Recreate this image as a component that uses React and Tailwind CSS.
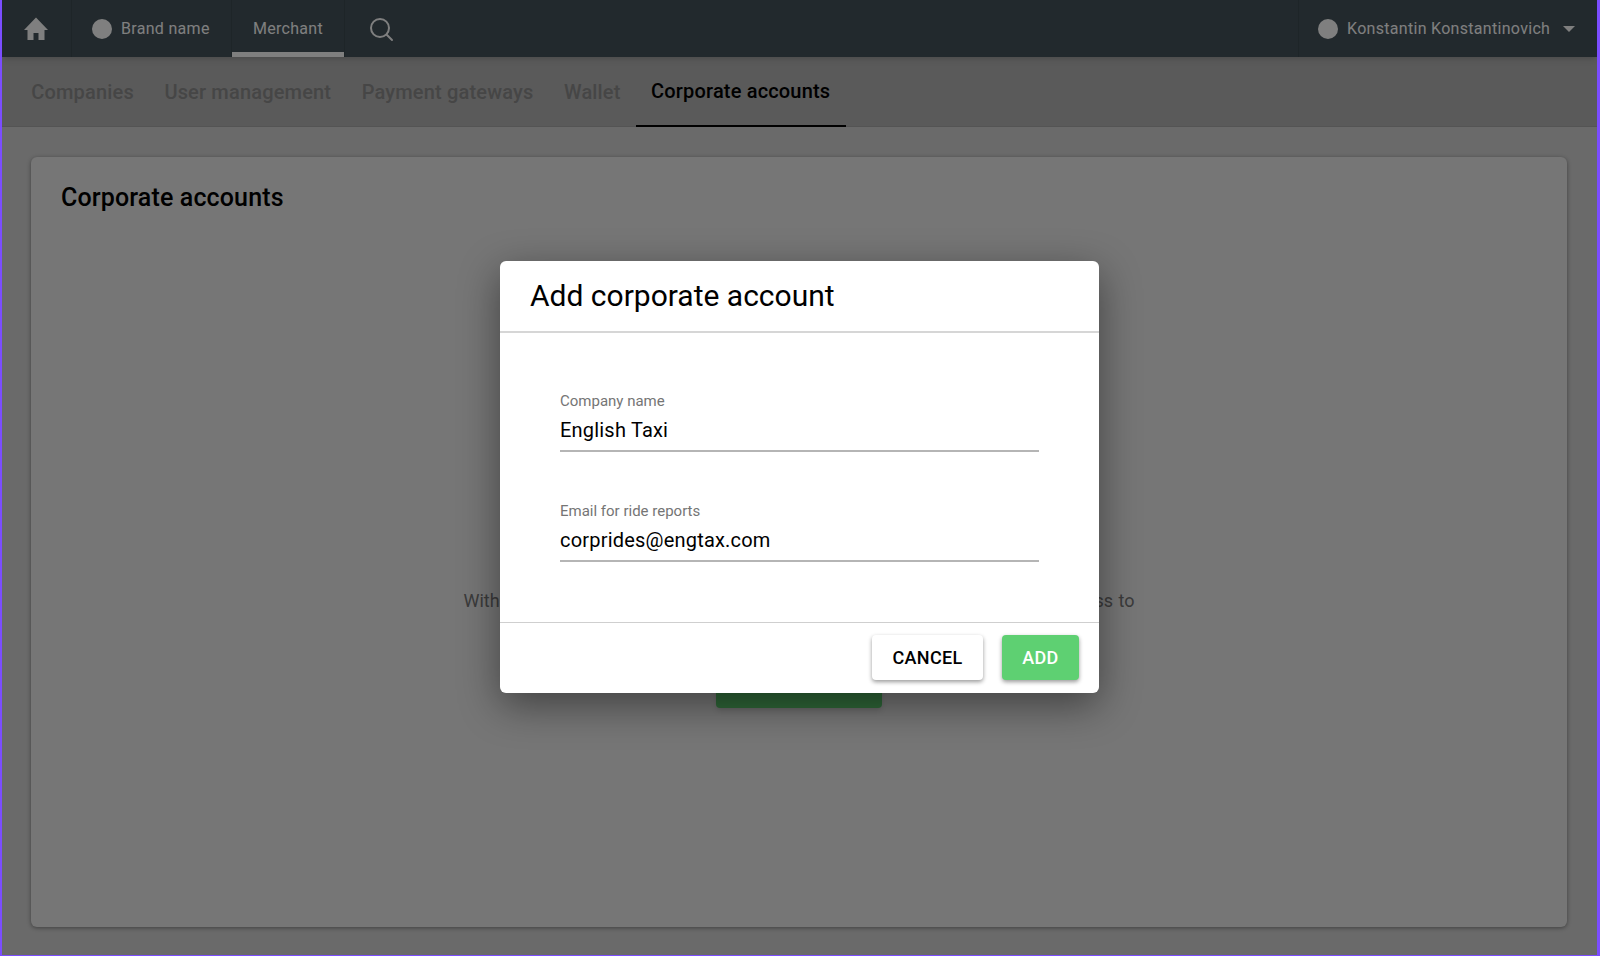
import React from "react";

const tabs = ["Companies", "User management", "Payment gateways", "Wallet", "Corporate accounts"];

function Field({ label, value }) {
  return (
    <div className="flex flex-col border-b-2 border-[#b5b5b5] h-[60px]">
      <span className="text-[15px] leading-[18px] text-[#757575]">{label}</span>
      <span className="text-xl leading-[26px] mt-[7px] text-black tracking-[0.2px]">{value}</span>
    </div>
  );
}

export default function App() {
  return (
    <div className="w-full h-screen overflow-hidden border-l-2 border-r-[3px] border-b border-[#7b4dff] font-['Roboto',sans-serif]">
      <div className="relative h-full bg-[#d4d4d4] flex flex-col">
        <header className="h-[57px] shrink-0 bg-[#44525a] flex items-center text-white shadow-md z-10">
          <div className="w-[70px] h-full flex items-center justify-center pr-[2px] border-r border-[#3d4a51]">
            <svg width="26" height="24" viewBox="0 0 26 24" fill="currentColor">
              <path d="M13 .5 1 13h3.500v10h6v-7h5v7h6V13H25z" />
            </svg>
          </div>
          <div className="w-[160px] h-full flex items-center pl-[20px] gap-[9px] border-r border-[#3d4a51] text-base tracking-[0.3px]">
            <span className="w-5 h-5 rounded-full bg-white" />
            <span>Brand name</span>
          </div>
          <div className="relative w-[113px] h-full flex items-center justify-center border-r border-[#3d4a51] text-base tracking-[0.3px]">
            Merchant
            <span className="absolute left-0 right-0 bottom-0 h-[5px] bg-white" />
          </div>
          <div className="ml-[24px] mt-[3px]">
            <svg width="26" height="26" viewBox="0 0 26 26" fill="none" stroke="currentColor" strokeWidth="2" strokeLinecap="round">
              <circle cx="11" cy="11" r="9" />
              <path d="M18 18 23 23" />
            </svg>
          </div>
          <div className="ml-auto w-[299px] h-full flex items-center pl-[19px] border-l border-[#3d4a51] text-base">
            <span className="w-5 h-5 rounded-full bg-white" />
            <span className="ml-[9px] tracking-[0.3px]">Konstantin Konstantinovich</span>
            <span className="ml-[13px] w-0 h-0 border-x-[6px] border-x-transparent border-t-[6px] border-t-white" />
          </div>
        </header>

        <nav className="h-[70px] shrink-0 bg-[#b4b4b4] border-b border-[#a8a8a8] flex pl-[14px]">
          {tabs.map((t, i) => (
            <div
              key={t}
              className={
                i === 4
                  ? "px-[15.25px] -mb-px flex items-center text-xl font-medium tracking-[0.17px] text-black border-b-2 border-black"
                  : "px-[15.25px] flex items-center text-xl font-medium tracking-[0.17px] text-[#8c8c8c]"
              }
            >
              {t}
            </div>
          ))}
        </nav>

        <main className="flex-1 min-h-0 pt-[30px] pl-[29px] pr-[30px] pb-[28px]">
          <div className="h-full bg-[#ececec] rounded-md shadow-[0_1px_4px_rgba(0,0,0,0.4)] pt-[25px] px-[30px] flex flex-col items-center">
            <h2 className="self-start text-[25px] font-medium tracking-[0.14px] text-black leading-[32px]">Corporate accounts</h2>
            <p className="mt-[375px] w-[671px] text-lg leading-6 text-[#777777] [text-align-last:justify]">
              With corporate accounts your partner companies can book rides and get access to
            </p>
            <button className="mt-[50px] w-[166px] h-[45px] rounded bg-[#5ed072] shadow-md" />
          </div>
        </main>

        <div className="absolute inset-0 z-20 bg-black/50 flex items-center justify-center pb-[2px]">
          <div className="w-[599px] h-[432px] bg-white rounded-md shadow-[0_12px_40px_rgba(0,0,0,0.45)] flex flex-col">
            <div className="h-[72px] shrink-0 border-b-2 border-[#d6d6d6] flex items-center pl-[30px] text-[30px] text-black">
              Add corporate account
            </div>
            <div className="flex-1 px-[60px] pt-[59px] flex flex-col gap-[50px]">
              <Field label="Company name" value="English Taxi" />
              <Field label="Email for ride reports" value="corprides@engtax.com" />
            </div>
            <div className="h-[71px] shrink-0 border-t border-[#cfcfcf] flex items-center justify-end gap-[19px] pr-[20px]">
              <button className="w-[111px] h-[45px] rounded bg-white shadow-[0_2px_4px_rgba(0,0,0,0.4)] text-lg font-medium text-black tracking-[0.3px]">
                CANCEL
              </button>
              <button className="w-[77px] h-[45px] rounded bg-[#5ed072] shadow-[0_2px_4px_rgba(0,0,0,0.4)] text-lg font-medium text-white tracking-[0.3px]">
                ADD
              </button>
            </div>
          </div>
        </div>
      </div>
    </div>
  );
}
